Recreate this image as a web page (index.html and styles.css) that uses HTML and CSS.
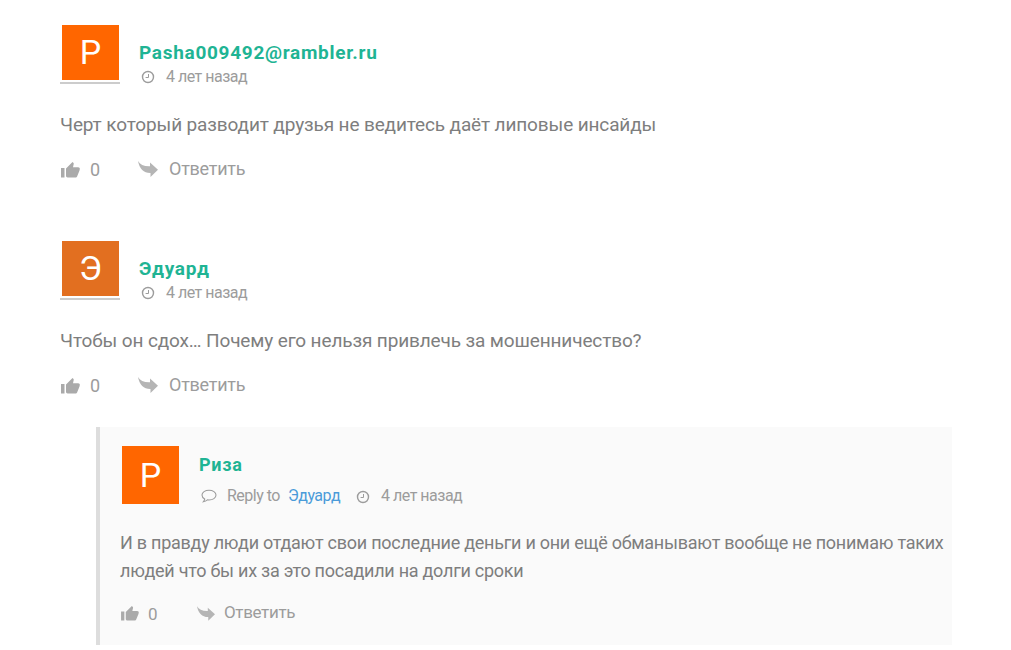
FILE: index.html
```html
<!DOCTYPE html>
<html lang="ru">
<head>
    <meta charset="UTF-8">
    <meta name="viewport" content="width=device-width, initial-scale=1.0">
    <title>Комментарии</title>
    <link rel="stylesheet" href="styles.css">
</head>
<body>
    <!-- Иконки -->
    <svg class="sprite" width="0" height="0">
        <symbol id="icon-clock" viewBox="0 0 14 14">
            <circle cx="7" cy="7" r="5.5" fill="none" stroke="currentColor" stroke-width="1.4"/>
            <path d="M7.500 4v3.500H4.600" fill="none" stroke="currentColor" stroke-width="1"/>
        </symbol>
        <symbol id="icon-comment" viewBox="0 0 16 14">
            <path d="M8 1.200c3.900 0 7 2.100 7 4.900s-3.100 4.900-7 4.900c-.6 0-1.100 0-1.600-.1-1.100 1-2.500 1.700-4.100 1.900.7-.8 1.200-1.600 1.400-2.700C2 9.200 1 7.700 1 6.100c0-2.800 3.100-4.900 7-4.900z" fill="none" stroke="currentColor" stroke-width="1.1"/>
        </symbol>
        <symbol id="icon-like" viewBox="0 0 19 17">
            <path d="M0 7h3.500v9.500H0zM5 7.500L11.500 1l1 1c.3.300.3.700.2 1.100L12 6.300h5.200c1 0 1.800.8 1.600 1.800l-.3 1.400-2.300 5.700c-.3.800-1 1.300-1.800 1.300H6.700C5.700 16.500 5 15.700 5 14.800z" fill="currentColor"/>
        </symbol>
        <symbol id="icon-reply" viewBox="0 0 20 16">
            <path d="M0 0c2 3.600 6 5.400 12 5.200V1.500L20 8.800l-7.500 7.200v-4C6 12.200 1.500 8 0 0z" fill="currentColor"/>
        </symbol>
    </svg>

    <div class="comments">
        <div class="comment">
            <div class="comment-header">
                <div class="avatar">P</div>
                <div class="info">
                    <div class="author">Pasha009492@rambler.ru</div>
                    <div class="meta">
                        <svg class="clock"><use href="#icon-clock"/></svg>
                        <span>4 лет назад</span>
                    </div>
                </div>
            </div>
            <p class="text">Черт который разводит друзья не ведитесь даёт липовые инсайды</p>
            <div class="comment-footer">
                <svg class="like"><use href="#icon-like"/></svg>
                <span class="count">0</span>
                <svg class="arrow"><use href="#icon-reply"/></svg>
                <span class="answer">Ответить</span>
            </div>
        </div>

        <div class="comment">
            <div class="comment-header">
                <div class="avatar avatar-dark">Э</div>
                <div class="info">
                    <div class="author">Эдуард</div>
                    <div class="meta">
                        <svg class="clock"><use href="#icon-clock"/></svg>
                        <span>4 лет назад</span>
                    </div>
                </div>
            </div>
            <p class="text">Чтобы он сдох… Почему его нельзя привлечь за мошенничество?</p>
            <div class="comment-footer">
                <svg class="like"><use href="#icon-like"/></svg>
                <span class="count">0</span>
                <svg class="arrow"><use href="#icon-reply"/></svg>
                <span class="answer">Ответить</span>
            </div>
        </div>

        <!-- Ответ на комментарий -->
        <div class="comment reply">
            <div class="comment-header">
                <div class="avatar">P</div>
                <div class="info">
                    <div class="author">Риза</div>
                    <div class="meta">
                        <svg class="bubble"><use href="#icon-comment"/></svg>
                        <span class="reply-to">Reply to</span>
                        <a href="#">Эдуард</a>
                        <svg class="clock"><use href="#icon-clock"/></svg>
                        <span>4 лет назад</span>
                    </div>
                </div>
            </div>
            <p class="text">И в правду люди отдают свои последние деньги и они ещё обманывают вообще не понимаю таких людей что бы их за это посадили на долги сроки</p>
            <div class="comment-footer">
                <svg class="like"><use href="#icon-like"/></svg>
                <span class="count">0</span>
                <svg class="arrow"><use href="#icon-reply"/></svg>
                <span class="answer">Ответить</span>
            </div>
        </div>
    </div>
</body>
</html>
```
FILE: styles.css
```css
/* Базовые стили */
* {
    box-sizing: border-box;
}

body {
    font-family: Roboto, "Liberation Sans", sans-serif;
    background-color: #fff;
    color: #7e7e7e;
    margin: 0;
}

.sprite {
    display: block;
}

.comments {
    width: 952px;
    padding: 25px 0 0 60px;
}

/* Комментарий */
.comment {
    height: 216px;
}

.comment-header {
    display: flex;
    height: 60px;
}

.avatar {
    width: 60px;
    height: 59px;
    padding: 0 1px 2px 2px;
    border-bottom: 2px solid #ccc;
    background: #ff6600 content-box;
    color: #fff;
    font-size: 34px;
    line-height: 55px;
    text-align: center;
}

.avatar-dark {
    background-color: #e26f20;
}

.info {
    margin-left: 19px;
    padding-top: 16px;
}

.author {
    color: #1fb494;
    font-size: 19px;
    font-weight: 700;
    letter-spacing: 0.7px;
    line-height: 23px;
}

.meta {
    display: flex;
    align-items: center;
    height: 24px;
    color: #9c9c9c;
    font-size: 16px;
    letter-spacing: -0.5px;
}

.meta a {
    color: #4a9bd9;
    text-decoration: none;
}

.clock {
    width: 14px;
    height: 14px;
    margin: 2px 11px 0 2px;
}

.bubble {
    width: 16px;
    height: 14px;
    margin: 0 10px 0 2px;
}

/* Текст комментария */
.text {
    margin: 26px 0 0;
    font-size: 19px;
    letter-spacing: -0.13px;
    line-height: 28px;
}

.comment-footer {
    display: flex;
    align-items: center;
    height: 24px;
    margin-top: 18px;
    color: #9c9c9c;
    font-size: 18px;
}

.like {
    width: 19px;
    height: 17px;
    margin-left: 1px;
    color: #aaa;
}

.count {
    width: 10px;
    margin: 1px 38px 0 10px;
}

.arrow {
    width: 20px;
    height: 16px;
    margin-right: 11px;
    color: #b5b5b5;
}

.answer {
    margin-bottom: 2px;
    letter-spacing: -0.25px;
}

/* Вложенный ответ */
.reply {
    width: 856px;
    height: 218px;
    margin: -30px 0 0 36px;
    padding: 19px 0 0 20px;
    border-left: 4px solid #ddd;
    background-color: #fafafa;
}

.reply .avatar {
    height: 58px;
    padding-bottom: 0;
    border-bottom: 0;
    line-height: 58px;
}

.reply .info {
    padding-top: 7px;
}

.reply .author {
    font-size: 18px;
}

.reply .meta {
    height: 39px;
}

.reply .reply-to {
    margin-right: 8px;
}

.reply .meta .clock {
    margin: 2px 11px 0 16px;
}

.reply .text {
    margin-top: 23px;
    font-size: 18px;
    letter-spacing: -0.26px;
}

.reply .comment-footer {
    margin-top: 16px;
    font-size: 17px;
}

.reply .like {
    width: 18px;
    height: 16px;
}

.reply .count {
    margin: 1px 39px 0 9px;
}

.reply .arrow {
    width: 18px;
    height: 15px;
    margin-right: 9px;
}

.reply .answer {
    letter-spacing: -0.35px;
}
```
